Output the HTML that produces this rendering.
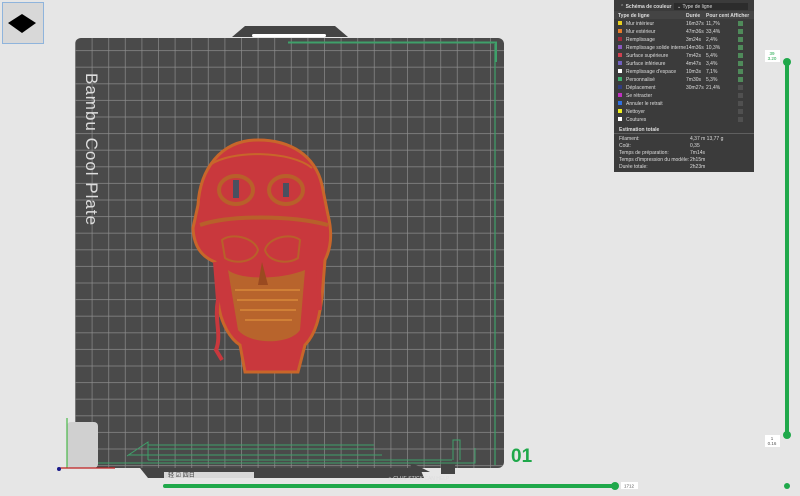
<!DOCTYPE html>
<html><head><meta charset="utf-8"><style>
html,body{margin:0;padding:0;background:#e6e6e6;width:800px;height:496px;overflow:hidden;font-family:"Liberation Sans",sans-serif}
</style></head><body>
<svg width="800" height="496" viewBox="0 0 800 496" xmlns="http://www.w3.org/2000/svg" style="position:absolute;left:0;top:0">
<defs>
<pattern id="g" x="75" y="33.5" width="16.6" height="16.6" patternUnits="userSpaceOnUse">
<path d="M0.5 0V16.6M0 0.5H16.6" stroke="#8c8c8c" stroke-width="0.7" fill="none"/>
</pattern>
</defs>
<rect x="2.5" y="2.5" width="41" height="41" fill="#d8d8d8" stroke="#8fb4dc" stroke-width="1"/>
<path d="M8 23L22 14L36 23L22 33Z" fill="#000"/>
<path d="M232 37L245 26H335L348 37Z" fill="#444"/>
<rect x="252" y="34" width="74" height="3" rx="1.5" fill="#fff"/>
<rect x="75" y="38" width="429" height="430" rx="6" fill="#4a4a4a"/>
<rect x="75" y="38" width="429" height="430" rx="6" fill="url(#g)"/>
<path d="M140 468L148 478H424L420 468Z" fill="#444"/>
<path d="M410 462L430 472L412 472Z" fill="#444"/>
<rect x="441" y="462" width="14" height="12" fill="#444"/>
<rect x="164" y="472" width="90" height="6" fill="#d8d8d8"/>
<text x="168" y="477" font-size="6" fill="#333">轻 ☑ 四日</text>
<text x="388" y="480" font-size="5" fill="#ddd">◇ GLUE STICK CAN HELP</text>
<path d="M288 42.5H496V62" stroke="#3fa06a" stroke-width="2" fill="none"/>
<path d="M495 44V465" stroke="#3fa06a" stroke-width="1.2" fill="none"/>
<text transform="translate(86,73) rotate(90)" font-size="17" fill="#ddd" letter-spacing="1">Bambu Cool Plate</text>
<g stroke="#3fa06a" stroke-width="1" fill="none">
<path d="M148 445H374M148 449H374M128 455H382M148 460H452M98 463H475V448M127 456L148 442V460M453 460V440H460V460"/>
</g>
<rect x="67" y="422" width="31" height="46" rx="4" fill="#d0d0d0"/>
<path d="M67 468V418" stroke="#2bb02b" stroke-width="1"/>
<path d="M60 468H115" stroke="#c02020" stroke-width="1.2"/>
<circle cx="59" cy="469" r="2" fill="#1a1a8a"/>
<text x="511" y="462" font-size="19" font-weight="bold" fill="#1fa84a">01</text>
<!-- skull -->
<g>
<path d="M258 140C220 140 200 170 198 205L193 228C194 250 205 258 215 262L218 300C220 325 232 340 240 345L245 372H298L305 345C318 332 320 310 322 298L325 260C330 250 333 235 328 215L322 185C315 155 290 140 258 140Z" fill="#c9383d" stroke="#c8662a" stroke-width="3"/>
<path d="M215 262L218 300C220 325 232 340 240 345L245 372H298L305 345C318 332 320 310 322 298L325 260" fill="none" stroke="#c8662a" stroke-width="2"/>
<path d="M200 225C230 215 290 215 328 225" stroke="#b8602a" stroke-width="4" fill="none"/>
<path d="M210 165C230 150 290 150 312 168" stroke="#c8662a" stroke-width="2" fill="none"/>
<ellipse cx="236" cy="190" rx="17" ry="14" fill="none" stroke="#b8602a" stroke-width="4"/>
<ellipse cx="286" cy="190" rx="17" ry="14" fill="none" stroke="#b8602a" stroke-width="4"/>
<rect x="233" y="180" width="6" height="18" fill="#4a5060"/>
<rect x="283" y="183" width="6" height="14" fill="#4a5060"/>
<path d="M222 240C232 232 255 238 258 250C255 262 235 265 225 258Z" fill="#c9383d" stroke="#b8602a" stroke-width="2"/>
<path d="M300 240C290 232 268 238 265 250C268 262 288 265 298 258Z" fill="#c9383d" stroke="#b8602a" stroke-width="2"/>
<path d="M228 270C240 280 280 280 305 270L300 330C290 345 250 345 238 330Z" fill="#b8642c"/>
<path d="M235 290H300M237 300H298M240 310H296M245 320H292" stroke="#d88a3a" stroke-width="1.5"/>
<path d="M262 262L258 285L268 285Z" fill="#9a4a20"/>
<path d="M215 262L218 300C214 320 222 335 216 350L222 360" stroke="#c9383d" stroke-width="4" fill="none"/>
<path d="M318 270L320 310" stroke="#c9383d" stroke-width="4"/>
</g>
<rect x="614" y="0" width="140" height="172" fill="#3b3b3b"/>
<rect x="674" y="3" width="74" height="7" fill="#2c2c2c"/>
<g font-size="5" fill="#ddd">
<text x="620" y="8">⌃  <tspan font-weight="bold">Schéma de couleur</tspan></text>
<text x="677" y="8">⌄ Type de ligne</text>
<rect x="614" y="11" width="140" height="8" fill="#444"/>
<text x="618" y="17" font-weight="bold">Type de ligne</text>
<text x="686" y="17" font-weight="bold">Durée</text>
<text x="706" y="17" font-weight="bold">Pour cent Afficher</text>
<g>
<rect x="618" y="21" width="4" height="4" fill="#e8d020"/><text x="626" y="25">Mur intérieur</text><text x="686" y="25">16m37s</text><text x="706" y="25">11,7%</text>
<rect x="618" y="29" width="4" height="4" fill="#e87d2a"/><text x="626" y="33">Mur extérieur</text><text x="686" y="33">47m36s</text><text x="706" y="33">33,4%</text>
<rect x="618" y="37" width="4" height="4" fill="#a02a3a"/><text x="626" y="41">Remplissage</text><text x="686" y="41">3m24s</text><text x="706" y="41">2,4%</text>
<rect x="618" y="45" width="4" height="4" fill="#8a5ac0"/><text x="626" y="49">Remplissage solide interne</text><text x="686" y="49">14m36s</text><text x="706" y="49">10,3%</text>
<rect x="618" y="53" width="4" height="4" fill="#d04050"/><text x="626" y="57">Surface supérieure</text><text x="686" y="57">7m42s</text><text x="706" y="57">5,4%</text>
<rect x="618" y="61" width="4" height="4" fill="#7060c0"/><text x="626" y="65">Surface inférieure</text><text x="686" y="65">4m47s</text><text x="706" y="65">3,4%</text>
<rect x="618" y="69" width="4" height="4" fill="#fff"/><text x="626" y="73">Remplissage d'espace</text><text x="686" y="73">10m3s</text><text x="706" y="73">7,1%</text>
<rect x="618" y="77" width="4" height="4" fill="#40b070"/><text x="626" y="81">Personnalisé</text><text x="686" y="81">7m30s</text><text x="706" y="81">5,3%</text>
<rect x="618" y="85" width="4" height="4" fill="#303c80"/><text x="626" y="89">Déplacement</text><text x="686" y="89">30m27s</text><text x="706" y="89">21,4%</text>
<rect x="618" y="93" width="4" height="4" fill="#c030c0"/><text x="626" y="97">Se rétracter</text>
<rect x="618" y="101" width="4" height="4" fill="#3070e0"/><text x="626" y="105">Annuler le retrait</text>
<rect x="618" y="109" width="4" height="4" fill="#f0f020"/><text x="626" y="113">Nettoyer</text>
<rect x="618" y="117" width="4" height="4" fill="#fff"/><text x="626" y="121">Coutures</text>
</g>
<g fill="#4f8a5a"><rect x="738" y="21" width="5" height="5"/><rect x="738" y="29" width="5" height="5"/><rect x="738" y="37" width="5" height="5"/><rect x="738" y="45" width="5" height="5"/><rect x="738" y="53" width="5" height="5"/><rect x="738" y="61" width="5" height="5"/><rect x="738" y="69" width="5" height="5"/><rect x="738" y="77" width="5" height="5"/></g>
<g fill="#505050"><rect x="738" y="85" width="5" height="5"/><rect x="738" y="93" width="5" height="5"/><rect x="738" y="101" width="5" height="5"/><rect x="738" y="109" width="5" height="5"/><rect x="738" y="117" width="5" height="5"/></g>
<text x="619" y="131" font-weight="bold">Estimation totale</text>
<rect x="614" y="133" width="140" height="0.6" fill="#777"/>
<text x="619" y="140">Filament:</text><text x="690" y="140">4,37 m   13,77 g</text>
<text x="619" y="147">Coût:</text><text x="690" y="147">0,35</text>
<text x="619" y="154">Temps de préparation:</text><text x="690" y="154">7m14s</text>
<text x="619" y="161">Temps d'impression du modèle:</text><text x="690" y="161">2h15m</text>
<text x="619" y="168">Durée totale:</text><text x="690" y="168">2h23m</text>
</g>
<rect x="785" y="62" width="4" height="373" fill="#1fa84a"/>
<circle cx="787" cy="62" r="4" fill="#1fa84a"/>
<circle cx="787" cy="435" r="4" fill="#1fa84a"/>
<rect x="765" y="50" width="15" height="12" fill="#fff"/>
<text x="772" y="55" font-size="4.5" fill="#1fa84a" text-anchor="middle">39</text>
<text x="772" y="60" font-size="4.5" fill="#1fa84a" text-anchor="middle">3.20</text>
<rect x="765" y="435" width="15" height="12" fill="#fff"/>
<text x="772" y="440" font-size="4.5" fill="#555" text-anchor="middle">1</text>
<text x="772" y="445" font-size="4.5" fill="#555" text-anchor="middle">0.16</text>
<rect x="163" y="484" width="452" height="4" rx="2" fill="#1fa84a"/>
<circle cx="615" cy="486" r="4" fill="#1fa84a"/>
<rect x="621" y="482" width="17" height="7" fill="#fff"/>
<text x="629" y="487.5" font-size="4.5" fill="#555" text-anchor="middle">1712</text>
<circle cx="787" cy="486" r="3" fill="#1fa84a"/>
</svg>
</body></html>
